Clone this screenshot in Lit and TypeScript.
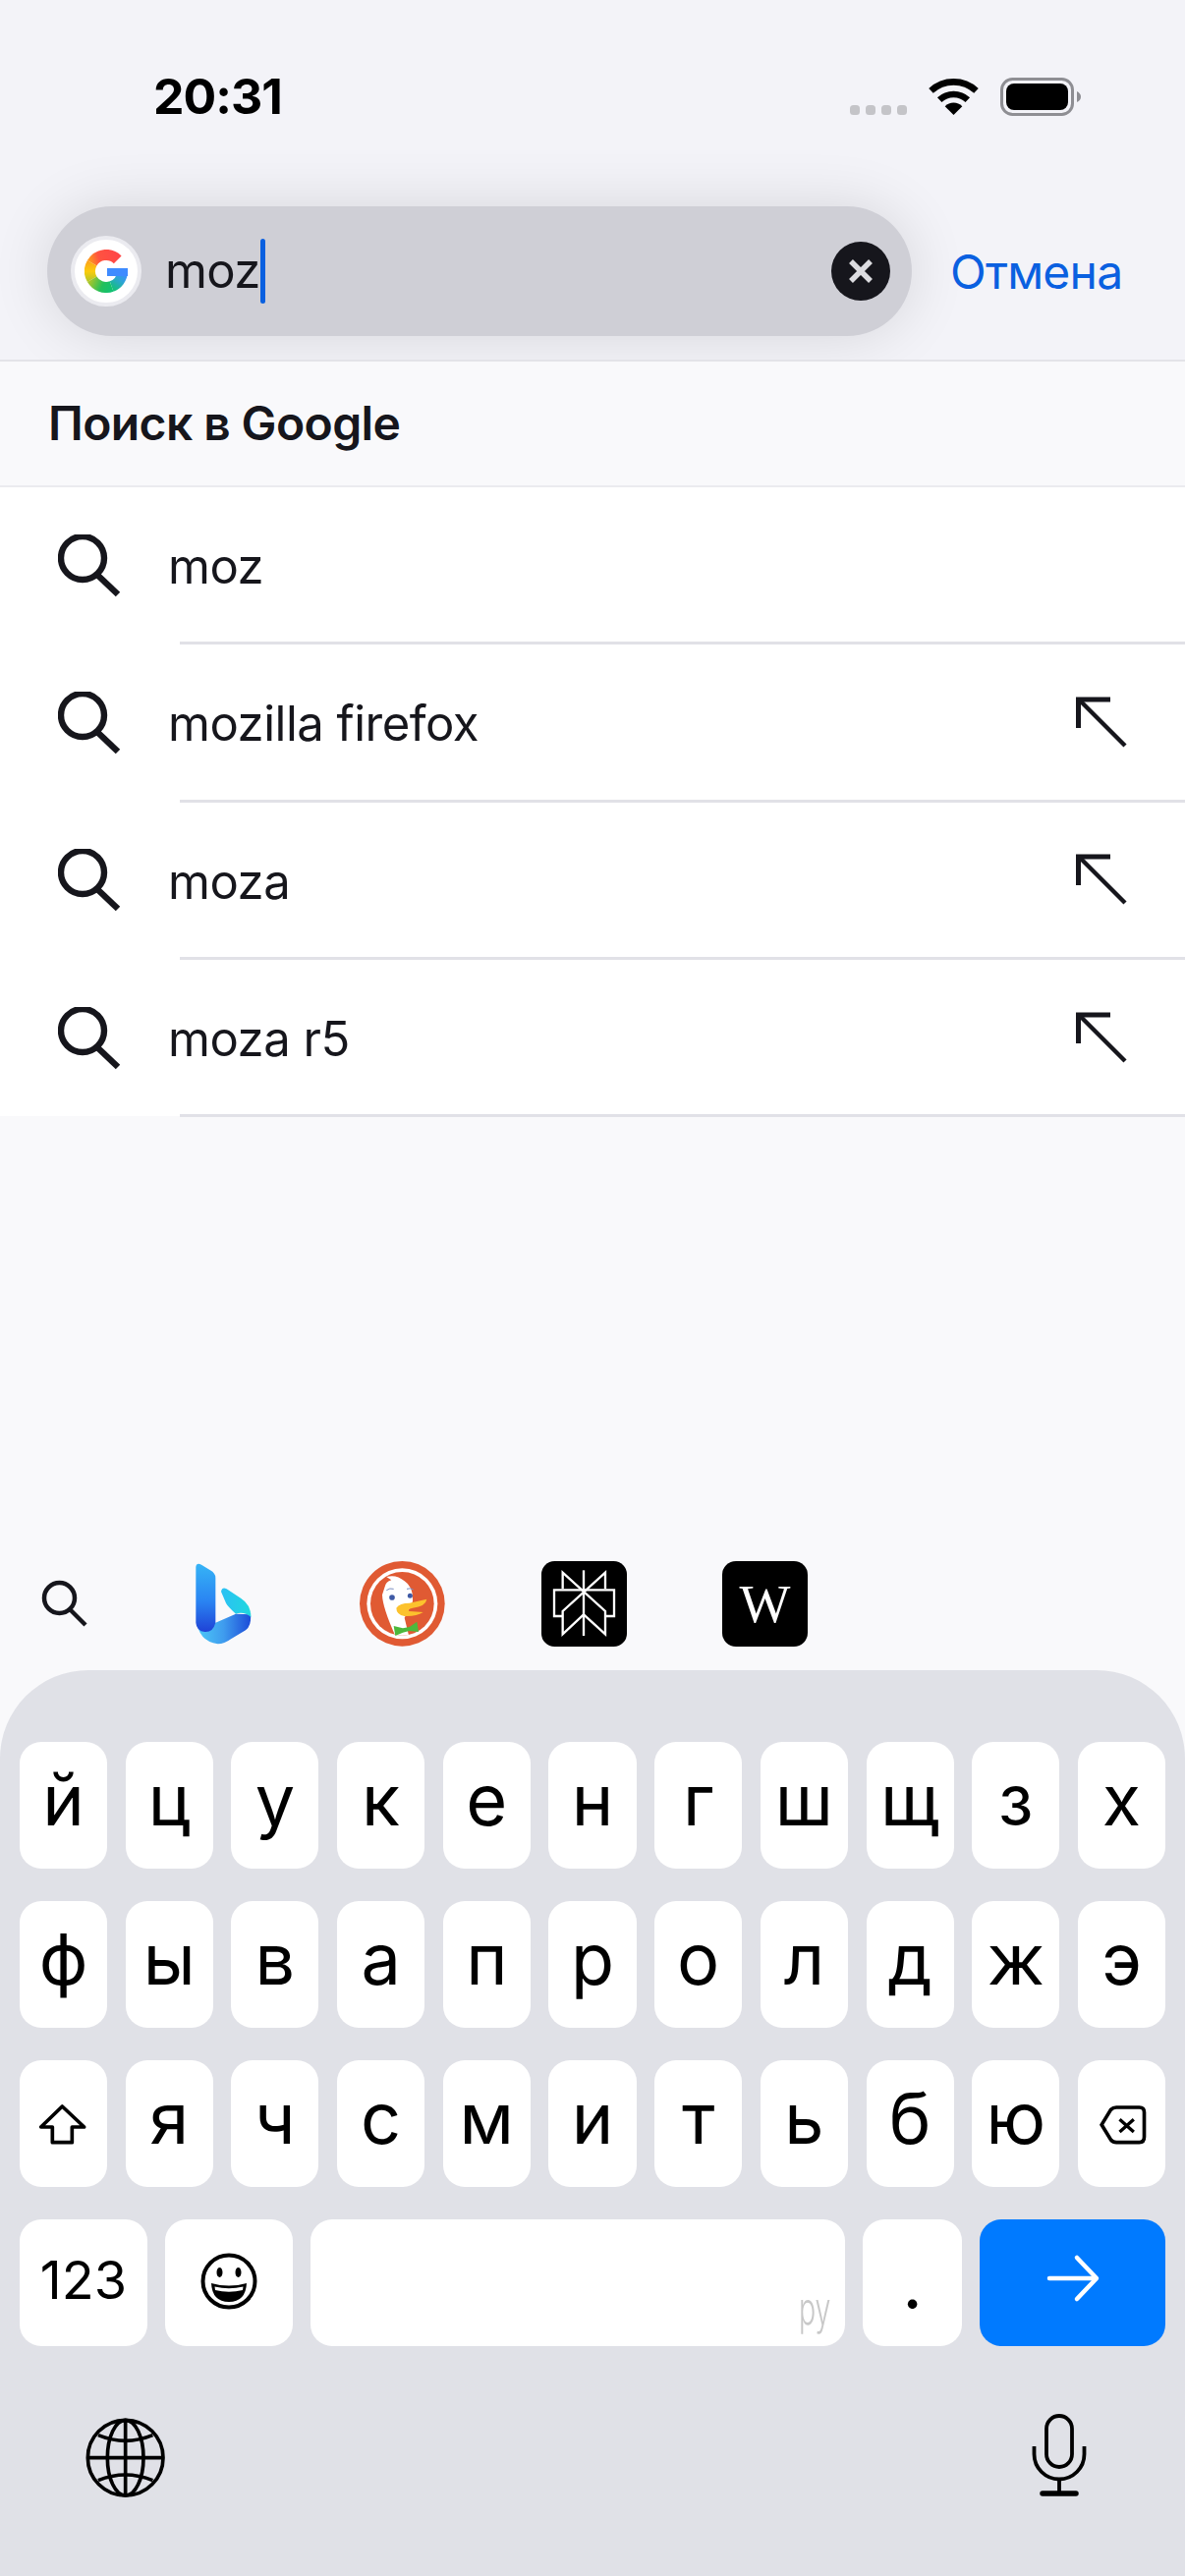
import { LitElement, html, css, svg } from "lit";
import { customElement } from "lit/decorators.js";

const searchIcon = html`<svg class="row-search" viewBox="0 0 64 64" fill="none" stroke="#16161c" stroke-width="6.4"><circle cx="25" cy="24" r="22"/><path d="M41 42 L61 61" stroke-linecap="butt"/></svg>`;
const arrowIcon = html`<svg class="row-arrow" viewBox="0 0 52 52" fill="none" stroke="#16161c" stroke-width="4.4"><path d="M35 3 H2.5 V32" stroke-width="5"/><path d="M3 3 L50 50"/></svg>`;

const google = html`<svg class="g" viewBox="0 0 44 44" fill="none" stroke-width="11">
  <defs>
    <linearGradient id="gr" gradientUnits="userSpaceOnUse" x1="34" y1="8" x2="6" y2="16"><stop offset="0" stop-color="#ff4747"/><stop offset=".65" stop-color="#ff5340"/><stop offset="1" stop-color="#fc9a1c"/></linearGradient>
    <linearGradient id="gy" gradientUnits="userSpaceOnUse" x1="7" y1="12" x2="8" y2="32"><stop offset="0" stop-color="#fca41a"/><stop offset=".5" stop-color="#fbcc0c"/><stop offset="1" stop-color="#b6c726"/></linearGradient>
    <linearGradient id="gg" gradientUnits="userSpaceOnUse" x1="7" y1="29" x2="29" y2="38"><stop offset="0" stop-color="#a5c52c"/><stop offset=".55" stop-color="#24c05a"/><stop offset="1" stop-color="#12c172"/></linearGradient>
    <linearGradient id="gb" gradientUnits="userSpaceOnUse" x1="26" y1="38" x2="38" y2="22"><stop offset="0" stop-color="#14c07a"/><stop offset=".6" stop-color="#2ea3d8"/><stop offset="1" stop-color="#3e8bff"/></linearGradient>
  </defs>
  <path d="M33.7 10.3 A16.5 16.5 0 0 0 7.7 13.75" stroke="url(#gr)"/>
  <path d="M7.7 13.75 A16.5 16.5 0 0 0 7.7 30.25" stroke="url(#gy)"/>
  <path d="M7.7 30.25 A16.5 16.5 0 0 0 27.6 37.5" stroke="url(#gg)"/>
  <path d="M27.6 37.5 A16.5 16.5 0 0 0 38.5 23" stroke="url(#gb)"/>
  <rect x="23" y="19" width="21" height="8" fill="#3e8bff" stroke="none"/>
</svg>`;

const statusIcons = html`<svg class="status-icons" viewBox="0 0 235 39">
  ${[0, 16, 32, 48].map((x) => svg`<rect x=${x} y="28" width="10" height="10" rx="3.5" fill="#c4c4c8"/>`)}
  <path d="M82.5 13.4 A33.7 33.7 0 0 1 128.5 13.4" fill="none" stroke="#000" stroke-width="6.6"/>
  <path d="M91.2 22.6 A21 21 0 0 1 119.8 22.6" fill="none" stroke="#000" stroke-width="6.6"/>
  <path d="M105.5 38 L96.7 29.2 A12.5 12.5 0 0 1 114.3 29.2 Z" fill="#000"/>
  <rect x="154.5" y="1.5" width="72" height="36" rx="11" fill="none" stroke="#8e8e93" stroke-width="3"/>
  <rect x="159" y="6" width="63" height="27" rx="8" fill="#000"/>
  <path d="M231 14 Q235 16 235 19.5 Q235 23 231 25 Z" fill="#8e8e93"/>
</svg>`;

const miniSearch = html`<svg class="eng" viewBox="0 0 87 87" fill="none" stroke="#16161c" stroke-width="4.5"><circle cx="38.5" cy="37.5" r="15.5"/><path d="M49 49 L65 65"/></svg>`;

const bing = html`<svg class="eng bing" viewBox="-24 27 261 261">
  <defs>
    <linearGradient id="b1" x1="0" y1="0" x2="0" y2="1"><stop offset="0" stop-color="#36b4f6"/><stop offset=".55" stop-color="#2a84f2"/><stop offset="1" stop-color="#1f42d6"/></linearGradient>
    <linearGradient id="b2" x1="0" y1="0" x2="1" y2="0"><stop offset="0" stop-color="#4ccaf8"/><stop offset=".5" stop-color="#3f9cee"/><stop offset="1" stop-color="#1c4cd8"/></linearGradient>
    <linearGradient id="b3" x1="0" y1="0" x2="1" y2="0"><stop offset="0" stop-color="#2cc0f4"/><stop offset="1" stop-color="#1fd8de"/></linearGradient>
  </defs>
  <path d="M30 205 Q35 272 95 280 Q115 280 135 265 L180 238 Q198 225 195 190 L150 188 L88 215 Z" fill="url(#b2)"/>
  <path d="M105 120 Q108 105 122 112 L165 140 Q197 160 196 198 Q175 180 150 188 Q125 165 120 155 Z" fill="url(#b3)"/>
  <path d="M28 45 Q30 30 45 38 L72 55 Q88 64 88 78 L88 215 Q80 245 55 243 Q30 240 28 215 Z" fill="url(#b1)"/>
</svg>`;

const ddg = html`<svg class="eng ddg" viewBox="528 27 261 261">
  <defs><clipPath id="dc"><circle cx="658" cy="157" r="97"/></clipPath></defs>
  <circle cx="658" cy="157" r="130" fill="#e05a33"/>
  <circle cx="658" cy="157" r="108" fill="#fff"/>
  <circle cx="658" cy="157" r="97" fill="#e05a33"/>
  <g clip-path="url(#dc)">
    <path d="M605 105 Q608 90 625 85 L610 75 Q640 66 665 88 Q692 105 690 150 L665 200 L680 262 L640 262 Q598 170 597 130 Z" fill="#fff"/>
  </g>
  <path d="M632 225 L660 232 L680 228 L703 212 L708 243 L680 240 L660 245 L637 255 Z" fill="#4cb83c"/>
  <path d="M640 170 Q650 155 680 155 L733 143 Q730 165 690 170 Q670 175 680 180 L722 183 Q700 197 665 195 Q640 190 640 170 Z" fill="#fcc22d"/>
  <circle cx="627" cy="138" r="8.5" fill="#3f5aa5"/>
  <circle cx="682" cy="133" r="7.5" fill="#3f5aa5"/>
  <path d="M610 116 Q620 108 632 112 M672 112 Q682 108 692 114" fill="none" stroke="#7a8cc0" stroke-width="3"/>
</svg>`;

const perplexity = html`<svg class="eng" viewBox="33 27 261 261">
  <rect x="33" y="27" width="261" height="261" rx="40" fill="#000"/>
  <g fill="none" stroke="#fff" stroke-width="7">
    <path d="M162 55 V255"/>
    <path d="M98 112 V62 L228 180 V250 L162 190 L98 250 V180 L228 62 V112"/>
    <path d="M98 195 H72 V115 H255 V195 H228"/>
  </g>
</svg>`;

const shift = html`<svg class="fill" viewBox="0 -69 267 387" fill="none" stroke="#000" stroke-width="11" stroke-linejoin="round"><path d="M130 72 L197 135 H160 V182 H100 V135 H65 Z"/></svg>`;
const del = html`<svg class="fill" viewBox="9 -69 264 387" fill="none" stroke="#000" stroke-width="11"><path d="M125 75 H195 Q210 75 210 90 V165 Q210 182 195 182 H125 Q115 182 108 174 L80 128 L108 82 Q115 75 125 75 Z"/><path d="M135 112 L178 150 M178 112 L135 150" stroke-width="10"/></svg>`;

const emoji = html`<svg class="emoji" viewBox="-30 -30 60 60">
  <circle r="26.5" fill="none" stroke="#000" stroke-width="4"/>
  <ellipse cx="-9.5" cy="-9" rx="3" ry="5"/>
  <ellipse cx="9.5" cy="-9" rx="3" ry="5"/>
  <path d="M-18 2 Q0 7 18 2 Q17 21 0 21 Q-17 21 -18 2 Z"/>
  <path d="M-14.5 5.5 Q0 9 14.5 5.5 L14 9 Q0 12.5 -14 9 Z" fill="#fff"/>
</svg>`;

const goArrow = html`<svg class="go-arrow" viewBox="0 0 60 50" fill="none" stroke="#fff" stroke-width="4.5" stroke-linecap="round" stroke-linejoin="round"><path d="M6 25 H52"/><path d="M34 4 L54 25 L34 46" /></svg>`;

const globe = html`<svg class="globe" viewBox="0 0 390 360" fill="none" stroke="#000" stroke-width="11">
  <circle cx="203" cy="185" r="115"/>
  <ellipse cx="203" cy="185" rx="55" ry="115"/>
  <path d="M203 70 V300 M88 185 H318"/>
  <path d="M120 116 Q203 150 286 116 M120 254 Q203 220 286 254"/>
</svg>`;

const mic = html`<svg class="mic" viewBox="0 0 56 84" fill="none" stroke="#000" stroke-width="3.8">
  <rect x="15" y="2" width="26" height="52" rx="13"/>
  <path d="M2.5 33 V41 A25.5 25.5 0 0 0 53.5 41 V33"/>
  <path d="M28 66 V80"/>
  <path d="M11 81 H45" stroke-width="5.5" stroke-linecap="round"/>
</svg>`;

const rows: [string, boolean][] = [
  ["moz", false],
  ["mozilla firefox", true],
  ["moza", true],
  ["moza r5", true],
];
const row1 = "йцукенгшщзх".split("");
const row2 = "фывапролджэ".split("");
const row3 = "ячсмитьбю".split("");

@customElement("app-root")
export class AppRoot extends LitElement {
  static styles = css`
    :host {
      display: flex;
      flex-direction: column;
      width: 1206px;
      height: 2622px;
      overflow: hidden;
      background: #f9f9fb;
      font-family: Inter, "Noto Sans", sans-serif;
      color: #16161c;
    }
    .header {
      height: 368px;
      box-sizing: border-box;
      background: #f3f3f8;
      border-bottom: 2px solid #e3e3e8;
      overflow: hidden;
      padding-top: 80px;
    }
    .status {
      display: flex;
      align-items: center;
      height: 36px;
      padding-left: 156px;
    }
    .time {
      font-size: 50px;
      font-weight: 700;
      color: #000;
      line-height: 36px;
      letter-spacing: -1px;
    }
    .status-icons {
      width: 235px;
      height: 39px;
      margin-left: auto;
      margin-right: 106px;
    }
    .search-row {
      display: flex;
      align-items: center;
      gap: 39px;
      margin-top: 94px;
      padding-left: 48px;
    }
    .pill {
      display: flex;
      align-items: center;
      box-sizing: border-box;
      width: 880px;
      height: 132px;
      border-radius: 66px;
      background: #cfcfd6;
      box-shadow: 0 0 60px rgba(0, 0, 0, 0.12);
      padding: 0 22px 0 24px;
    }
    .g-wrap {
      display: flex;
      align-items: center;
      justify-content: center;
      box-sizing: border-box;
      width: 72px;
      height: 72px;
      border-radius: 50%;
      background: #fff;
      border: 4px solid #ebebf0;
      flex: none;
    }
    .g {
      width: 44px;
      height: 44px;
    }
    .query {
      margin-left: 24px;
      font-size: 49px;
      line-height: 66px;
      letter-spacing: -0.7px;
    }
    .caret {
      width: 5px;
      height: 66px;
      border-radius: 3px;
      background: #0a60e0;
    }
    .clear {
      display: flex;
      align-items: center;
      justify-content: center;
      width: 60px;
      height: 60px;
      border-radius: 50%;
      background: #16161c;
      margin-left: auto;
    }
    .clear svg {
      width: 30px;
      height: 30px;
    }
    .cancel {
      font-size: 48px;
      color: #0a60e0;
      letter-spacing: -0.8px;
    }
    .section {
      display: flex;
      align-items: center;
      box-sizing: border-box;
      height: 128px;
      padding: 0 0 2px 49px;
      border-bottom: 2px solid #ebebef;
      font-size: 48px;
      font-weight: 600;
      letter-spacing: -0.6px;
    }
    .list {
      background: #fff;
      height: 640px;
    }
    .row {
      display: flex;
      align-items: center;
      height: 157.33px;
      padding-left: 59px;
    }
    .row-search {
      width: 64px;
      height: 64px;
      margin-top: 2px;
      flex: none;
    }
    .row-text {
      margin-left: 48px;
      font-size: 49px;
      letter-spacing: -0.5px;
      padding-top: 4px;
    }
    .row-arrow {
      width: 52px;
      height: 52px;
      margin-left: auto;
      margin-right: 59px;
    }
    .sep {
      height: 3px;
      margin-left: 183px;
      background: #e1e1e7;
    }
    .spacer {
      flex: 1;
    }
    .engines {
      display: flex;
      gap: 97px;
      height: 87px;
      padding-left: 22px;
      margin-bottom: 24px;
    }
    .eng {
      width: 87px;
      height: 87px;
      flex: none;
    }
    .eng:first-child {
      margin-right: -24px;
    }
    .ddg {
      margin-right: 1px;
    }
    .bing {
      filter: blur(0.6px);
    }
    .wiki {
      display: flex;
      align-items: center;
      justify-content: center;
      width: 87px;
      height: 87px;
      border-radius: 14px;
      background: #000;
      color: #fff;
      font-family: "Liberation Serif", serif;
      font-size: 55px;
    }
    .kbd {
      height: 922px;
      box-sizing: border-box;
      background: #e0e1e7;
      border-radius: 90px 90px 0 0;
      padding: 73px 20px 0;
      flex: none;
    }
    .keys {
      display: grid;
      grid-template-columns: repeat(11, 1fr);
      gap: 18.7px;
      height: 129px;
      margin-bottom: 33px;
    }
    .key {
      display: flex;
      align-items: center;
      justify-content: center;
      box-sizing: border-box;
      height: 129px;
      border-radius: 22px;
      background: #fff;
      color: #000;
      font-size: 72px;
      font-weight: 380;
      padding-bottom: 12px;
      overflow: hidden;
    }
    .key.icon {
      padding: 0;
    }
    .fill {
      width: 100%;
      height: 100%;
    }
    .bottom {
      display: flex;
      gap: 18px;
    }
    .w-num {
      width: 130px;
      flex: none;
      font-size: 54px;
      font-weight: 400;
      padding-bottom: 6px;
    }
    .w-space {
      width: 544px;
      flex: none;
      justify-content: flex-end;
      align-items: flex-end;
      padding: 0 15px 16px 0;
    }
    .ru {
      font-size: 46px;
      font-weight: 300;
      color: #c8c8c8;
      line-height: 1;
      transform: scaleX(0.62);
      transform-origin: right;
    }
    .w-dot {
      width: 101px;
      flex: none;
      font-size: 72px;
      padding-bottom: 0;
    }
    .w-go {
      width: 189px;
      flex: none;
      background: #007aff;
      padding: 0 0 9px;
    }
    .emoji {
      width: 60px;
      height: 60px;
      margin-bottom: 4px;
    }
    .go-arrow {
      width: 60px;
      height: 50px;
    }
    .extras {
      display: flex;
      justify-content: space-between;
      align-items: flex-start;
      margin: 52px -20px 0;
      padding: 0 100px 0 60px;
    }
    .globe {
      width: 130px;
      height: 120px;
    }
    .mic {
      width: 56px;
      height: 84px;
      margin-top: 17px;
    }
  `;

  render() {
    return html`
      <div class="header">
        <div class="status">
          <span class="time">20:31</span>
          ${statusIcons}
        </div>
        <div class="search-row">
          <div class="pill">
            <div class="g-wrap">${google}</div>
            <span class="query">moz</span>
            <span class="caret"></span>
            <div class="clear">
              <svg viewBox="0 0 24 24" fill="none" stroke="#dcdce0" stroke-width="4.4"><path d="M4 4 L20 20 M20 4 L4 20"/></svg>
            </div>
          </div>
          <span class="cancel">Отмена</span>
        </div>
      </div>
      <div class="section">Поиск в Google</div>
      <div class="list">
        ${rows.map(
          ([t, a]) => html`
            <div class="row">
              ${searchIcon}
              <span class="row-text">${t}</span>
              ${a ? arrowIcon : ""}
            </div>
            <div class="sep"></div>
          `
        )}
      </div>
      <div class="spacer"></div>
      <div class="engines">
        ${miniSearch}${bing}${ddg}${perplexity}
        <div class="wiki">W</div>
      </div>
      <div class="kbd">
        <div class="keys">${row1.map((k) => html`<div class="key">${k}</div>`)}</div>
        <div class="keys">${row2.map((k) => html`<div class="key">${k}</div>`)}</div>
        <div class="keys">
          <div class="key icon">${shift}</div>
          ${row3.map((k) => html`<div class="key">${k}</div>`)}
          <div class="key icon">${del}</div>
        </div>
        <div class="bottom">
          <div class="key w-num">123</div>
          <div class="key w-num icon">${emoji}</div>
          <div class="key w-space"><span class="ru">ру</span></div>
          <div class="key w-dot">.</div>
          <div class="key w-go">${goArrow}</div>
        </div>
        <div class="extras">${globe}${mic}</div>
      </div>
    `;
  }
}
